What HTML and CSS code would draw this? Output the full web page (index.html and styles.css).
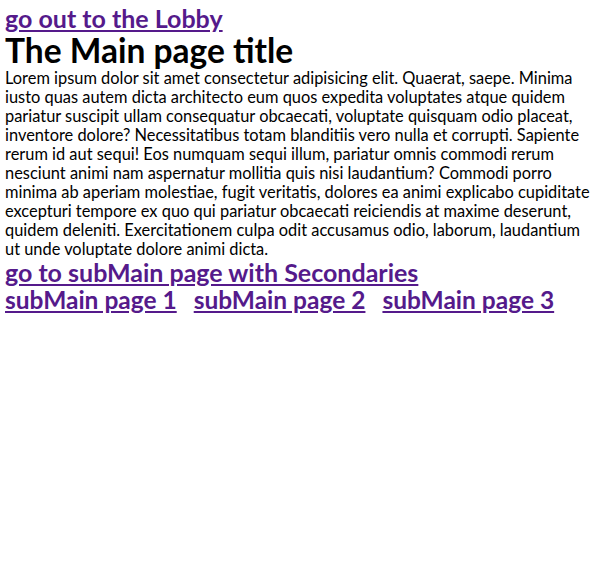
FILE: index.html
```html
<!DOCTYPE html>
<html>
<head>
<meta charset="utf-8">
<link rel="stylesheet" href="styles.css">
</head>
<body>
<a class="big-link" href="#lobby">go out to the Lobby</a>
<h1 class="title">The Main page title</h1>
<p class="text">Lorem ipsum dolor sit amet consectetur adipisicing elit. Quaerat, saepe. Minima iusto quas autem dicta architecto eum quos expedita voluptates atque quidem pariatur suscipit ullam consequatur obcaecati, voluptate quisquam odio placeat, inventore dolore? Necessitatibus totam blanditiis vero nulla et corrupti. Sapiente rerum id aut sequi! Eos numquam sequi illum, pariatur omnis commodi rerum nesciunt animi nam aspernatur mollitia quis nisi laudantium? Commodi porro minima ab aperiam molestiae, fugit veritatis, dolores ea animi explicabo cupiditate excepturi tempore ex quo qui pariatur obcaecati reiciendis at maxime deserunt, quidem deleniti. Exercitationem culpa odit accusamus odio, laborum, laudantium ut&nbsp;unde voluptate dolore animi dicta.</p>
<a class="big-link" href="#sub">go to subMain page with Secondaries</a>
<nav class="sub-nav">
<a class="big-link nav-link" href="#s1">subMain page 1</a>
<a class="big-link nav-link" href="#s2">subMain page 2</a>
<a class="big-link nav-link" href="#s3">subMain page 3</a>
</nav>
</body>
</html>
```
FILE: styles.css
```css
body {
  margin: 4px 5px;
  font-family: Lato, sans-serif;
  color: #000;
  background: #fff;
}
.big-link {
  display: block;
  font-size: 25px;
  line-height: 28px;
  font-weight: bold;
  color: #551a8b;
  white-space: nowrap;
}
.nav-link {
  font-size: 24.5px;
}
.title {
  margin: 0;
  font-size: 33.5px;
  line-height: 36px;
}
.text {
  margin: 0;
  font-size: 16.4px;
  line-height: 19px;
}
.sub-nav {
  display: flex;
  gap: 17px;
}
```
